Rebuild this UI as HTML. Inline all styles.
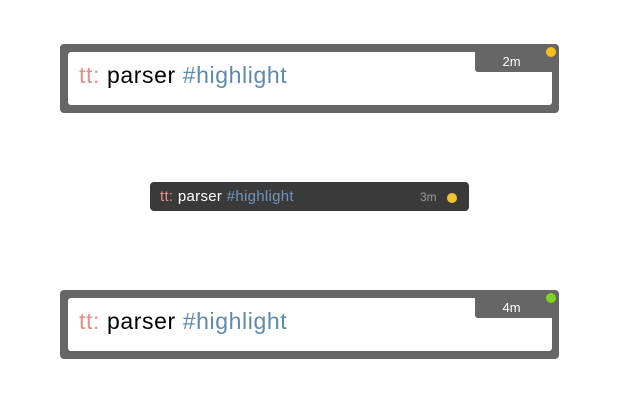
<!DOCTYPE html>
<html><head><style>
body{margin:0;width:620px;height:400px;background:#fff;position:relative;font-family:"Liberation Sans",sans-serif;overflow:hidden}
.big{position:absolute;left:60px;width:499px;height:69px;background:#666;border-radius:4px}
.big .in{position:absolute;left:8px;top:8px;right:7px;bottom:8px;background:#fff;border-radius:3px}
.big .txt{position:absolute;left:19px;top:18px;font-size:23px;white-space:nowrap;letter-spacing:0.6px}
.big .tab{position:absolute;right:7px;top:8px;width:77px;height:20px;background:#666;border-bottom-left-radius:3px;color:#fff;font-size:13px;line-height:19px;text-align:center;padding-right:4px;box-sizing:border-box}
.dot{position:absolute;width:10px;height:10px;border-radius:50%}
.tt{color:#e0918a}.h{color:#5f8aaa}
.small{position:absolute;left:150px;top:182px;width:319px;height:29px;background:#3a3a3a;border-radius:4px}
</style></head><body>
<div class="big" style="top:44px">
 <div class="in"></div>
 <div class="txt"><span class="tt">tt:</span> parser <span class="h">#highlight</span></div>
 <div class="tab">2m</div>
 <div class="dot" style="right:3px;top:3px;background:#f2c01e"></div>
</div>
<div class="small">
 <div style="position:absolute;left:10px;top:6px;font-size:15px;letter-spacing:0.3px;color:#fff;white-space:nowrap"><span class="tt">tt:</span> parser <span class="h" style="color:#6d97c0">#highlight</span></div>
 <div style="position:absolute;left:270px;top:8px;font-size:12px;color:#999">3m</div>
 <div class="dot" style="left:297px;top:11px;background:#f2c530"></div>
</div>
<div class="big" style="top:290px">
 <div class="in"></div>
 <div class="txt"><span class="tt">tt:</span> parser <span class="h">#highlight</span></div>
 <div class="tab">4m</div>
 <div class="dot" style="right:3px;top:3px;background:#7ed321"></div>
</div>
</body></html>
